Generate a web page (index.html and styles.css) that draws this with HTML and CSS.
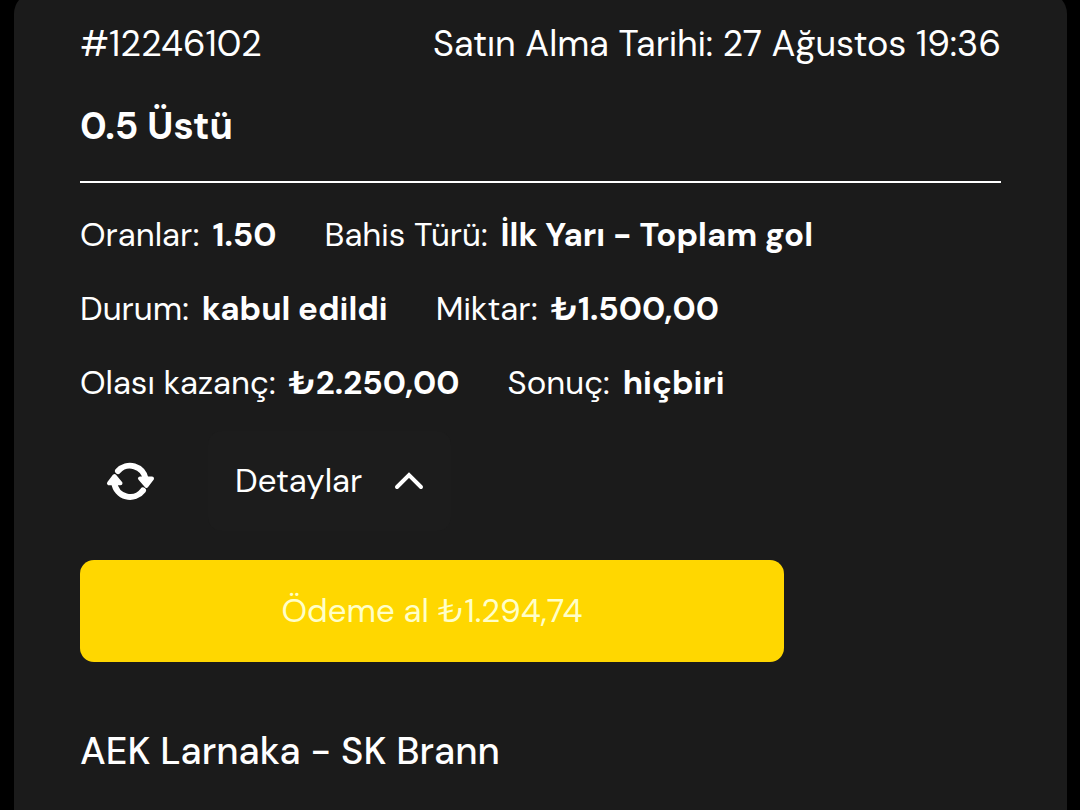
FILE: index.html
```html
<!DOCTYPE html>
<html lang="tr">
<head>
    <meta charset="UTF-8">
    <meta name="viewport" content="width=device-width, initial-scale=1.0">
    <title>Bahislerim</title>
    <link rel="stylesheet" href="styles.css">
</head>
<body>
    <main class="bet-card">
        <header class="bet-header">
            <span>#12246102</span>
            <span>Satın Alma Tarihi: 27 Ağustos 19:36</span>
        </header>
        <h1 class="bet-title">0.5 Üstü</h1>

        <dl class="bet-info">
            <div class="field"><dt>Oranlar:</dt><dd>1.50</dd></div>
            <div class="field"><dt>Bahis Türü:</dt><dd>İlk Yarı - Toplam gol</dd></div>
            <div class="field"><dt>Durum:</dt><dd>kabul edildi</dd></div>
            <div class="field"><dt>Miktar:</dt><dd>₺1.500,00</dd></div>
            <div class="field"><dt>Olası kazanç:</dt><dd>₺2.250,00</dd></div>
            <div class="field"><dt>Sonuç:</dt><dd>hiçbiri</dd></div>
        </dl>

        <div class="actions">
            <button type="button" class="refresh-btn" aria-label="Yenile">
                <svg width="48" height="40" viewBox="0 0 48 40" fill="none">
                    <path d="M12 10A16 16 0 0 1 39.700 18" stroke="#fff" stroke-width="6" stroke-linecap="round"/>
                    <path d="M37 29.500A16 16 0 0 1 8.300 22" stroke="#fff" stroke-width="6" stroke-linecap="round"/>
                    <path d="M34 17.500H46L40.500 24.800Z" fill="#fff" stroke="#fff" stroke-width="4" stroke-linejoin="round"/>
                    <path d="M3 22.300H14.500L8.500 15Z" fill="#fff" stroke="#fff" stroke-width="4" stroke-linejoin="round"/>
                </svg>
            </button>
            <button type="button" class="details-btn">
                Detaylar
                <svg width="30" height="18" viewBox="0 0 30 18" fill="none">
                    <path d="M3 15L15 3L27 15" stroke="#fff" stroke-width="4" stroke-linecap="round"/>
                </svg>
            </button>
        </div>
        <button type="button" class="cashout-btn">Ödeme al ₺1.294,74</button>

        <h2 class="match-name">AEK Larnaka - SK Brann</h2>
    </main>
</body>
</html>
```
FILE: styles.css
```css
* {
    box-sizing: border-box;
}
body {
    margin: 0;
    background: #000;
    color: #fff;
    font-family: 'DM Sans', Inter, sans-serif;
    font-size: 33px;
    line-height: 42px;
}
.bet-card {
    min-height: calc(100vh + 8px);
    margin: -8px 13px 0 14px;
    padding: 28px 66px;
    border-radius: 22px 22px 0 0;
    background: #1b1b1b;
}
.bet-header {
    display: flex;
    justify-content: space-between;
    font-size: 36px;
    line-height: 48px;
}
.bet-title {
    margin: 34px 0 31px;
    font-size: 38px;
    line-height: 48px;
    font-weight: 700;
}
.bet-info {
    display: flex;
    flex-wrap: wrap;
    gap: 32px 48px;
    margin: 0;
    padding-top: 31px;
    border-top: 2px solid #fff;
}
.field {
    display: flex;
    gap: 13px;
}
dd {
    margin: 0;
    font-weight: 700;
}
button {
    border: none;
    color: #fff;
    font: inherit;
    cursor: pointer;
}
.actions {
    display: flex;
    gap: 28px;
    margin: 27px 0 29px;
}
.refresh-btn {
    width: 100px;
    padding: 0;
    background: transparent;
}
.refresh-btn svg {
    display: block;
    margin: 0 auto;
}
.details-btn {
    display: flex;
    align-items: center;
    gap: 32px;
    height: 100px;
    padding: 0 27px;
    border-radius: 14px;
    background: #1c1c1c;
}
.cashout-btn {
    display: block;
    width: 704px;
    max-width: 100%;
    height: 102px;
    border-radius: 14px;
    background: #ffd700;
    color: #ffffc8;
}
.match-name {
    margin: 65px 0 0;
    font-size: 38px;
    line-height: 48px;
    font-weight: 500;
}
```
